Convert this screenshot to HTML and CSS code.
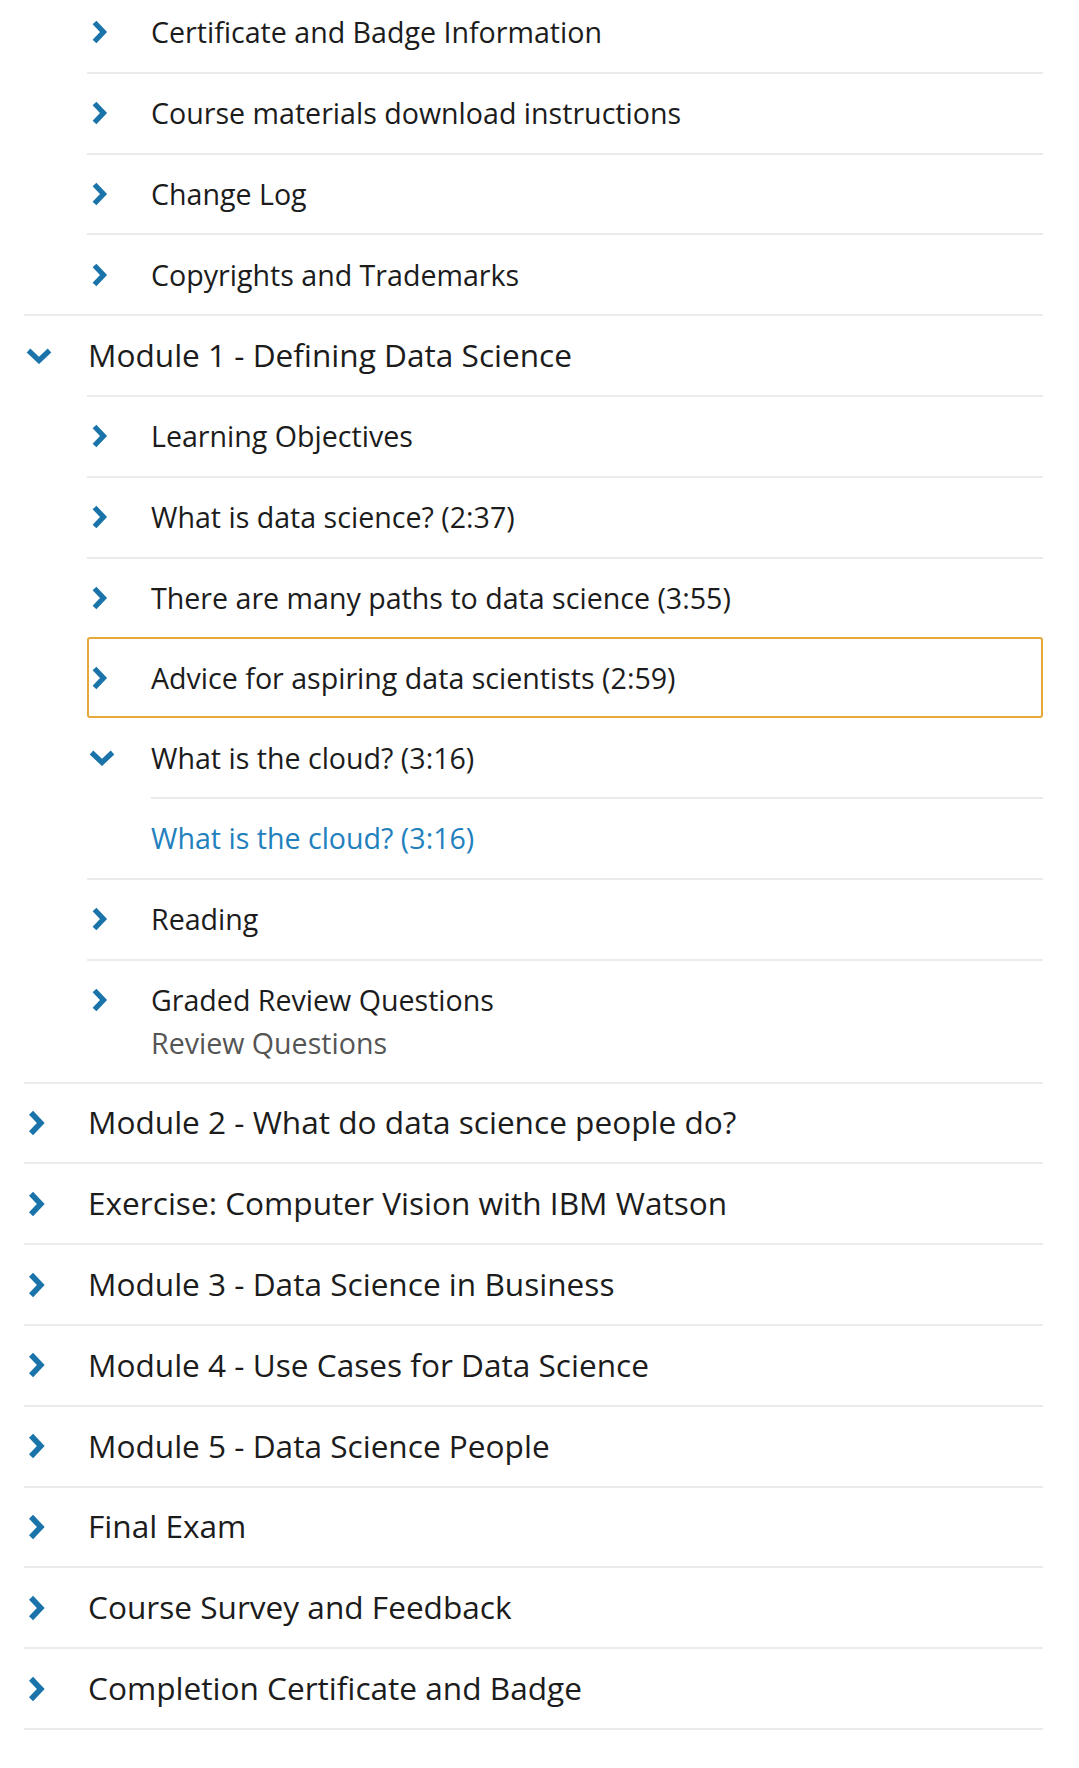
FILE: index.html
```html
<!DOCTYPE html>
<html lang="en">
<head>
<meta charset="utf-8">
<title>Course outline</title>
<link rel="stylesheet" href="styles.css">
</head>
<body>
<ul class="outline">
  <li class="module">
    <ul class="lessons">
      <li class="lesson"><div class="row"><span class="icon"><svg class="chev-right" viewBox="0 0 16 24"><path d="M2.5 2.5 L11.5 12 L2.5 21.5"/></svg></span><span class="label">Certificate and Badge Information</span></div></li>
      <li class="lesson"><div class="row"><span class="icon"><svg class="chev-right" viewBox="0 0 16 24"><path d="M2.5 2.5 L11.5 12 L2.5 21.5"/></svg></span><span class="label">Course materials download instructions</span></div></li>
      <li class="lesson"><div class="row"><span class="icon"><svg class="chev-right" viewBox="0 0 16 24"><path d="M2.5 2.5 L11.5 12 L2.5 21.5"/></svg></span><span class="label">Change Log</span></div></li>
      <li class="lesson"><div class="row"><span class="icon"><svg class="chev-right" viewBox="0 0 16 24"><path d="M2.5 2.5 L11.5 12 L2.5 21.5"/></svg></span><span class="label">Copyrights and Trademarks</span></div></li>
    </ul>
  </li>
  <li class="module">
    <div class="row module-row"><span class="icon"><svg class="chev-down" viewBox="0 0 26 16"><path d="M2.5 2.5 L13 12.5 L23.5 2.5"/></svg></span><span class="label">Module 1 - Defining Data Science</span></div>
    <ul class="lessons">
      <li class="lesson"><div class="row"><span class="icon"><svg class="chev-right" viewBox="0 0 16 24"><path d="M2.5 2.5 L11.5 12 L2.5 21.5"/></svg></span><span class="label">Learning Objectives</span></div></li>
      <li class="lesson"><div class="row"><span class="icon"><svg class="chev-right" viewBox="0 0 16 24"><path d="M2.5 2.5 L11.5 12 L2.5 21.5"/></svg></span><span class="label">What is data science? (2:37)</span></div></li>
      <li class="lesson"><div class="row"><span class="icon"><svg class="chev-right" viewBox="0 0 16 24"><path d="M2.5 2.5 L11.5 12 L2.5 21.5"/></svg></span><span class="label">There are many paths to data science (3:55)</span></div></li>
      <li class="lesson focused"><div class="row"><span class="icon"><svg class="chev-right" viewBox="0 0 16 24"><path d="M2.5 2.5 L11.5 12 L2.5 21.5"/></svg></span><span class="label">Advice for aspiring data scientists (2:59)</span></div></li>
      <li class="lesson">
        <div class="row"><span class="icon"><svg class="chev-down" viewBox="0 0 26 16"><path d="M2.5 2.5 L13 12.5 L23.5 2.5"/></svg></span><span class="label">What is the cloud? (3:16)</span></div>
        <ul class="children">
          <li class="child"><div class="row"><span class="label link">What is the cloud? (3:16)</span></div></li>
        </ul>
      </li>
      <li class="lesson"><div class="row"><span class="icon"><svg class="chev-right" viewBox="0 0 16 24"><path d="M2.5 2.5 L11.5 12 L2.5 21.5"/></svg></span><span class="label">Reading</span></div></li>
      <li class="lesson"><div class="row two-line"><span class="icon"><svg class="chev-right" viewBox="0 0 16 24"><path d="M2.5 2.5 L11.5 12 L2.5 21.5"/></svg></span><span class="stack"><span class="label">Graded Review Questions</span><span class="sublabel">Review Questions</span></span></div></li>
    </ul>
  </li>
  <li class="module"><div class="row module-row"><span class="icon"><svg class="chev-right" viewBox="0 0 16 24"><path d="M2.5 2.5 L11.5 12 L2.5 21.5"/></svg></span><span class="label">Module 2 - What do data science people do?</span></div></li>
  <li class="module"><div class="row module-row"><span class="icon"><svg class="chev-right" viewBox="0 0 16 24"><path d="M2.5 2.5 L11.5 12 L2.5 21.5"/></svg></span><span class="label">Exercise: Computer Vision with IBM Watson</span></div></li>
  <li class="module"><div class="row module-row"><span class="icon"><svg class="chev-right" viewBox="0 0 16 24"><path d="M2.5 2.5 L11.5 12 L2.5 21.5"/></svg></span><span class="label">Module 3 - Data Science in Business</span></div></li>
  <li class="module"><div class="row module-row"><span class="icon"><svg class="chev-right" viewBox="0 0 16 24"><path d="M2.5 2.5 L11.5 12 L2.5 21.5"/></svg></span><span class="label">Module 4 - Use Cases for Data Science</span></div></li>
  <li class="module"><div class="row module-row"><span class="icon"><svg class="chev-right" viewBox="0 0 16 24"><path d="M2.5 2.5 L11.5 12 L2.5 21.5"/></svg></span><span class="label">Module 5 - Data Science People</span></div></li>
  <li class="module"><div class="row module-row"><span class="icon"><svg class="chev-right" viewBox="0 0 16 24"><path d="M2.5 2.5 L11.5 12 L2.5 21.5"/></svg></span><span class="label">Final Exam</span></div></li>
  <li class="module"><div class="row module-row"><span class="icon"><svg class="chev-right" viewBox="0 0 16 24"><path d="M2.5 2.5 L11.5 12 L2.5 21.5"/></svg></span><span class="label">Course Survey and Feedback</span></div></li>
  <li class="module"><div class="row module-row"><span class="icon"><svg class="chev-right" viewBox="0 0 16 24"><path d="M2.5 2.5 L11.5 12 L2.5 21.5"/></svg></span><span class="label">Completion Certificate and Badge</span></div></li>
</ul>
</body>
</html>
```
FILE: styles.css
```css
html, body {
  margin: 0;
  padding: 0;
  background: #ffffff;
}

body {
  font-family: "Open Sans", "Noto Sans", sans-serif;
  color: #1c1c1c;
  overflow: hidden;
}

.outline {
  list-style: none;
  margin: -9px 36px 0 24px;
  padding: 0;
}

.lessons,
.children {
  list-style: none;
  padding: 0;
}

.module {
  border-bottom: 2px solid #ebebeb;
}

.lessons {
  margin: 0 0 0 63px;
}

.lesson {
  border-top: 2px solid #ebebeb;
}

.lesson.focused {
  border: 2px solid #e8a838;
  border-radius: 3px;
}

.lesson.focused .row {
  min-height: 76.8px;
  margin-left: -2px;
}

.lesson.focused + .lesson {
  border-top: 0;
}

.children {
  margin: 0 0 0 64px;
}

.child {
  border-top: 2px solid #ebebeb;
}

.row {
  display: flex;
  align-items: center;
  min-height: 78.8px;
}

.icon {
  flex: 0 0 64px;
  display: flex;
  align-items: center;
  height: 38px;
}

.chev-right,
.chev-down {
  fill: none;
  stroke: #1a74aa;
  stroke-width: 5.2;
  stroke-linecap: butt;
  stroke-linejoin: miter;
}

.chev-right {
  width: 16px;
  height: 24px;
  margin-left: 5px;
}

.chev-down {
  width: 26px;
  height: 16px;
  margin-left: 2px;
}

.module-row .chev-right {
  width: 18px;
  height: 26px;
  margin-left: 4px;
}

.module-row .chev-down {
  margin-left: 2px;
}

.label {
  font-size: 28.6px;
  line-height: 38px;
}

.module-row .label {
  font-size: 31.6px;
  line-height: 40px;
  margin-top: -1px;
}

.label.link {
  color: #2280bd;
}

.row.two-line {
  align-items: flex-start;
  padding: 20px 0 22px;
  min-height: 0;
}

.stack {
  display: flex;
  flex-direction: column;
}

.sublabel {
  font-size: 28.6px;
  line-height: 34px;
  margin-top: 7px;
  color: #555555;
}
```
